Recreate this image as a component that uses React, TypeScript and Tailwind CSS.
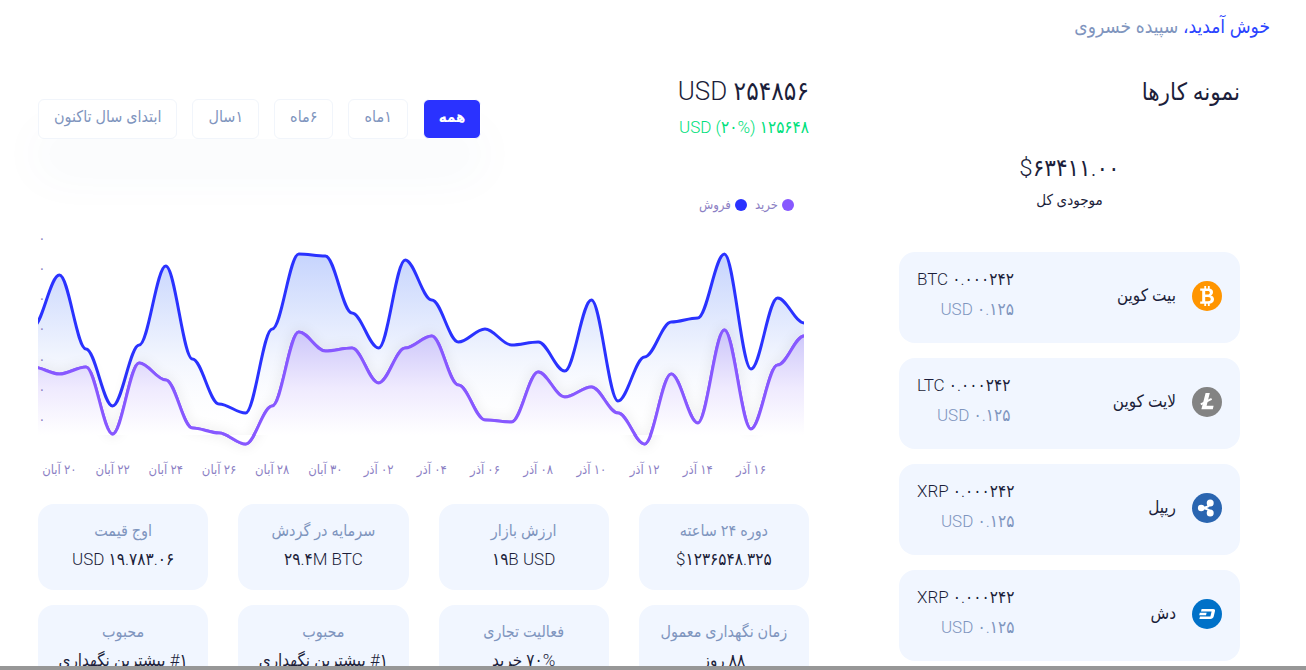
import React, { useState } from 'react';

type Coin = {
  name: string;
  amount: string;
  value: string;
  icon: React.ReactNode;
};

const BitcoinIcon = () => (
  <svg viewBox="0 0 30 30" className="size-[30px] shrink-0" aria-hidden="true">
    <circle cx="15" cy="15" r="15" fill="#ff9500" />
    <path
      d="M8.2 7.4 H16.4 C19.4 7.4 21 8.8 21 11 C21 12.8 20.2 13.9 18.8 14.5 C20.8 15 22 16.3 22 18.3 C22 21.2 20 22.8 16.7 22.8 H8.2 V20.4 H10.2 V9.8 H8.2 Z M13.2 9.9 V13.5 H15.6 C17.1 13.5 17.8 12.9 17.8 11.7 C17.8 10.5 17.1 9.9 15.6 9.9 Z M13.2 15.9 V20.3 H16 C17.8 20.3 18.7 19.6 18.7 18.1 C18.7 16.6 17.8 15.9 16 15.9 Z"
      fill="#fff"
      fillRule="evenodd"
    />
    <path d="M13.2 5 V8 M16.8 5 V8 M13.2 22 V25 M16.8 22 V25" stroke="#fff" strokeWidth="1.8" />
  </svg>
);

const LitecoinIcon = () => (
  <svg viewBox="0 0 30 30" className="size-[30px] shrink-0" aria-hidden="true">
    <circle cx="15" cy="15" r="15" fill="#838383" />
    <path d="M13.6 6 H17.8 L14.6 18.8 H21.6 L20.8 22.2 H9.4 Z" fill="#fff" />
    <path d="M8.8 17.4 L19.6 11.8" stroke="#fff" strokeWidth="1.9" />
  </svg>
);

const RippleIcon = () => (
  <svg viewBox="0 0 30 30" className="size-[30px] shrink-0" aria-hidden="true">
    <circle cx="15" cy="15" r="15" fill="#2a65b0" />
    <path d="M18 10 C18 13 16 14.6 9.5 15 C16 15.4 18 17 18 20" fill="none" stroke="#fff" strokeWidth="2.2" />
    <circle cx="9.2" cy="15" r="3.3" fill="#fff" />
    <circle cx="18.2" cy="10.1" r="3.5" fill="#fff" />
    <circle cx="18.2" cy="19.9" r="3.5" fill="#fff" />
  </svg>
);

const DashIcon = () => (
  <svg viewBox="0 0 30 30" className="size-[30px] shrink-0" aria-hidden="true">
    <circle cx="15" cy="15" r="15" fill="#0071c8" />
    <path d="M9.6 10 H21.2 C22.6 10 23.3 10.8 23 12 L21.7 17.6 C21.3 19.2 20 20 18.4 20 H7.4 L8 17.4 H18.4 L19.6 12.6 H9 Z" fill="#fff" />
    <path d="M7.8 13.8 H14.6 L14 16.2 H7.2 Z" fill="#fff" />
  </svg>
);

const COINS: Coin[] = [
  { name: 'بیت کوین', amount: 'BTC ۰.۰۰۰۲۴۲', value: 'USD ۰.۱۲۵', icon: <BitcoinIcon /> },
  { name: 'لایت کوین', amount: 'LTC ۰.۰۰۰۲۴۲', value: 'USD ۰.۱۲۵', icon: <LitecoinIcon /> },
  { name: 'ریپل', amount: 'XRP ۰.۰۰۰۲۴۲', value: 'USD ۰.۱۲۵', icon: <RippleIcon /> },
  { name: 'دش', amount: 'XRP ۰.۰۰۰۲۴۲', value: 'USD ۰.۱۲۵', icon: <DashIcon /> },
];

const RANGES = ['همه', '۱ماه', '۶ماه', '۱سال', 'ابتدای سال تاکنون'];

const STATS: { label: string; value: string; dir: 'ltr' | 'rtl' }[] = [
  { label: 'دوره ۲۴ ساعته', value: '$۱۲۳۶۵۴۸.۳۲۵', dir: 'ltr' },
  { label: 'ارزش بازار', value: '۱۹B USD', dir: 'ltr' },
  { label: 'سرمایه در گردش', value: '۲۹.۴M BTC', dir: 'ltr' },
  { label: 'اوج قیمت', value: 'USD ۱۹.۷۸۳.۰۶', dir: 'ltr' },
  { label: 'زمان نگهداری معمول', value: '۸۸ روز', dir: 'rtl' },
  { label: 'فعالیت تجاری', value: '۷۰% خرید', dir: 'rtl' },
  { label: 'محبوب', value: '#۱ بیشترین نگهداری', dir: 'rtl' },
  { label: 'محبوب', value: '#۱ بیشترین نگهداری', dir: 'rtl' },
];

const DATES = [
  '۲۰ آبان', '۲۲ آبان', '۲۴ آبان', '۲۶ آبان', '۲۸ آبان', '۳۰ آبان', '۰۲ آذر',
  '۰۴ آذر', '۰۶ آذر', '۰۸ آذر', '۱۰ آذر', '۱۲ آذر', '۱۴ آذر', '۱۶ آذر',
];

// daily values in chart units, the first one lies just outside the plot
const SELL = [
  97, 45, 119, 176, 115, 36, 129, 174, 183, 99, 24, 26, 83, 118, 30, 70, 112, 99, 115, 112,
  141, 70, 171, 127, 92, 88, 24, 139, 68, 93,
];
const BUY = [
  137, 144, 137, 204, 133, 150, 198, 203, 214, 176, 102, 121, 118, 153, 118, 106, 155, 190, 192, 142,
  167, 157, 183, 214, 144, 193, 100, 199, 135, 106,
];

const STEP = 26.6;
const START = -5.2;

const linePath = (values: number[]) =>
  values
    .map((y, i) => {
      const x = START + i * STEP;
      if (i === 0) return `M ${x} ${y}`;
      const bend = STEP * 0.35;
      return `C ${x - STEP + bend} ${values[i - 1]} ${x - bend} ${y} ${x} ${y}`;
    })
    .join(' ');

const areaPath = (values: number[]) =>
  `${linePath(values)} L ${START + (values.length - 1) * STEP} 205 L ${START} 205 Z`;

const Chart: React.FC = () => (
  <svg viewBox="0 0 771 255" className="block w-full" role="img" aria-label="خرید و فروش" direction="rtl">
    <defs>
      <linearGradient id="sellFill" gradientUnits="userSpaceOnUse" x1="0" y1="24" x2="0" y2="205">
        <stop offset="0" stopColor="#c6d4fd" />
        <stop offset="0.55" stopColor="#f0f4fe" />
        <stop offset="1" stopColor="#ffffff" stopOpacity="0" />
      </linearGradient>
      <linearGradient id="buyFill" gradientUnits="userSpaceOnUse" x1="0" y1="100" x2="0" y2="205">
        <stop offset="0" stopColor="#cbc5fa" />
        <stop offset="0.55" stopColor="#efeafe" />
        <stop offset="1" stopColor="#ffffff" />
      </linearGradient>
      <filter id="buyShadow" x="-5%" y="-20%" width="110%" height="140%">
        <feDropShadow dx="0" dy="0" stdDeviation="6" floodColor="#000" floodOpacity="0.16" />
      </filter>
      <clipPath id="plot">
        <rect x="0" y="0" width="766" height="230" />
      </clipPath>
    </defs>
    <g clipPath="url(#plot)">
      <path d={areaPath(SELL)} fill="url(#sellFill)" />
      <path d={linePath(SELL)} fill="none" stroke="#2a32ff" strokeWidth="3" />
      <g filter="url(#buyShadow)">
        <path d={linePath(BUY)} fill="none" stroke="#8758ff" strokeWidth="3" />
      </g>
      <path d={areaPath(BUY)} fill="url(#buyFill)" />
      <path d={linePath(BUY)} fill="none" stroke="#8758ff" strokeWidth="3" />
    </g>
    {[13, 43, 73, 103, 134, 164, 194].map(y => (
      <text key={y} x="4" y={y} fontSize="14" fill="#8c7fc4" textAnchor="middle">۰</text>
    ))}
    {DATES.map((date, i) => (
      <text key={date} x={START + STEP + i * 2 * STEP} y="244" fontSize="13" fill="#8c7fc4" textAnchor="middle">
        {date}
      </text>
    ))}
  </svg>
);

const Portfolio: React.FC = () => (
  <section>
    <h2 className="text-2xl leading-9">نمونه کارها</h2>
    <div className="mt-10 text-center">
      <p dir="ltr" className="text-2xl leading-9">$۶۳۴۱۱.۰۰</p>
      <p className="text-[15px] leading-7">موجودی کل</p>
    </div>
    <ul className="mt-[38px] space-y-[15px]">
      {COINS.map(coin => (
        <li key={coin.name} className="flex h-[91px] rounded-2xl bg-[#f1f6ff] px-[18px]">
          <div className="flex h-[88px] items-center gap-4">
            {coin.icon}
            <span className="text-[17px]">{coin.name}</span>
          </div>
          <div dir="ltr" className="mr-auto pt-3 text-right text-[17px]">
            <p className="leading-[30px]">{coin.amount}</p>
            <p className="leading-[30px] text-[#7f95be]">{coin.value}</p>
          </div>
        </li>
      ))}
    </ul>
  </section>
);

const Market: React.FC = () => {
  const [range, setRange] = useState(RANGES[0]);

  return (
    <section>
      <div className="flex items-start justify-between">
        <div dir="ltr" className="text-right">
          <p className="text-[26px] leading-[34px]">USD ۲۵۴۸۵۶</p>
          <p className="text-[17px] leading-[38px] text-[#00e07b]">USD (۲۰%) ۱۲۵۶۴۸</p>
        </div>
        <div className="mt-[25px] flex gap-[15px] shadow-[0_35px_50px_rgba(60,90,160,0.04)]">
          {RANGES.map(item => (
            <button
              key={item}
              type="button"
              onClick={() => setRange(item)}
              className={`h-10 rounded-md border px-[15px] pb-1 ${item === range ? 'border-white bg-[#2a32ff] text-[15px] font-bold text-white' : 'border-[#f1f5fb] bg-white text-base text-[#7f95be]'}`}
            >
              {item}
            </button>
          ))}
        </div>
      </div>
      <div className="mt-[49px] flex gap-2 pr-[15px] text-[13px] leading-5 text-[#8c7fc4]">
        <span className="flex items-center gap-1"><i className="size-3 rounded-full bg-[#8758ff]" />خرید</span>
        <span className="flex items-center gap-1"><i className="size-3 rounded-full bg-[#2a32ff]" />فروش</span>
      </div>
      <div className="mt-[15px]">
        <Chart />
      </div>
      <div className="mt-[19px] grid grid-cols-4 gap-x-[30px] gap-y-[15px]">
        {STATS.map((stat, i) => (
          <div key={i} className="h-[86px] rounded-2xl bg-[#f1f6ff] pt-[13px] text-center whitespace-nowrap">
            <p className="text-base leading-7 text-[#7f95be]">{stat.label}</p>
            <p dir={stat.dir} className="text-[17px] leading-7">{stat.value}</p>
          </div>
        ))}
      </div>
    </section>
  );
};

const App: React.FC = () => (
  <div dir="rtl" className="flex h-screen flex-col bg-white font-['Roboto','DejaVu_Sans_Condensed','DejaVu_Sans',sans-serif] font-light text-[#1c1e3a]">
    <div className="flex-1 overflow-hidden">
      <header className="px-9 pt-3 text-[19px] leading-[30px] text-[#7f95be]">
        <span className="text-[#2a43ff]">خوش آمدید،</span> سپیده خسروی
      </header>
      <main className="grid grid-cols-[341fr_771fr] gap-[90px] pt-8 pr-[66px] pl-[38px]">
        <Portfolio />
        <Market />
      </main>
    </div>
    <div className="h-1 shrink-0 bg-[#979797]" />
  </div>
);

export default App;
